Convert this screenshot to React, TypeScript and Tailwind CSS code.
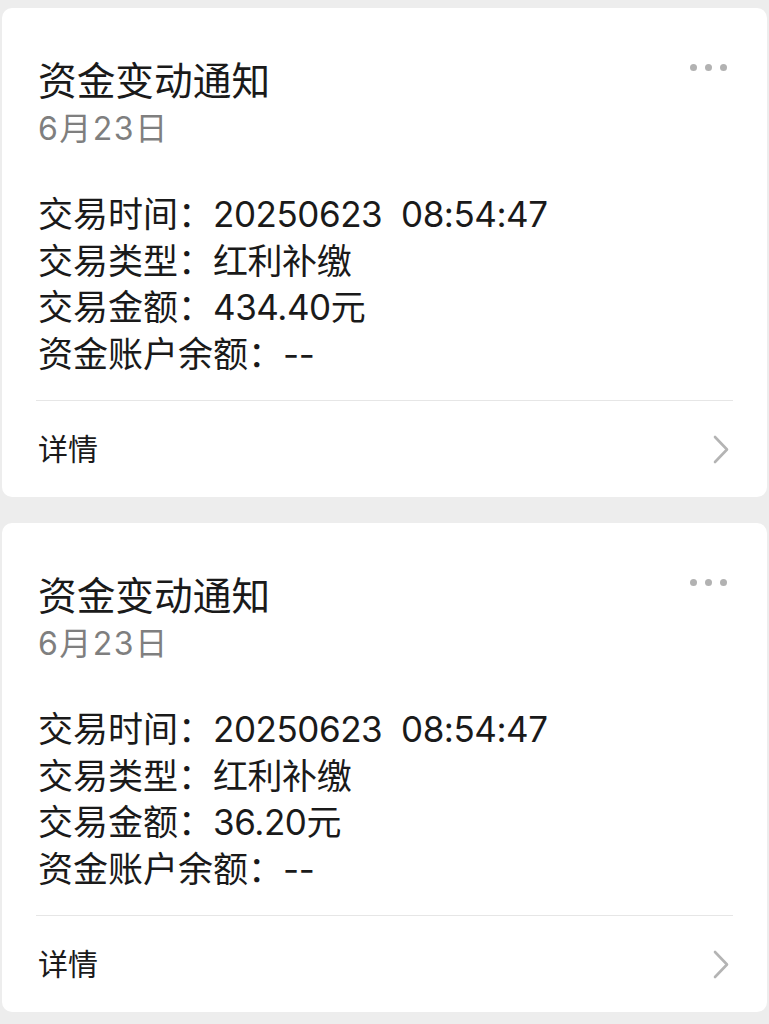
const FONT = "font-['Inter','Noto_Sans_CJK_SC',sans-serif]";

interface Notice {
  id: number;
  date: string;
  time: string;
  type: string;
  amount: string;
  balance: string;
}

const NOTICES: Notice[] = [
  { id: 1, date: "6月23日", time: "20250623  08:54:47", type: "红利补缴", amount: "434.40元", balance: "--" },
  { id: 2, date: "6月23日", time: "20250623  08:54:47", type: "红利补缴", amount: "36.20元", balance: "--" },
];

function MoreDots() {
  return (
    <div className="flex items-center gap-[8px] mt-[7px] mr-[6px]">
      <span className="block w-[7px] h-[7px] rounded-full bg-[#b2b2b2]" />
      <span className="block w-[7px] h-[7px] rounded-full bg-[#b2b2b2]" />
      <span className="block w-[7px] h-[7px] rounded-full bg-[#b2b2b2]" />
    </div>
  );
}

function Chevron() {
  return (
    <svg width="16" height="29" viewBox="0 0 16 29" fill="none" className="mr-[4px]">
      <polyline points="2,2 14,14.5 2,27" stroke="#b4b4b4" strokeWidth="2.6" strokeLinecap="round" strokeLinejoin="round" />
    </svg>
  );
}

function NoticeCard({ n }: { n: Notice }) {
  const rows = [
    ["交易时间：", n.time],
    ["交易类型：", n.type],
    ["交易金额：", n.amount],
    ["资金账户余额：", n.balance],
  ];
  return (
    <div className="bg-white rounded-[10px] px-[34px]">
      <div className="flex items-start justify-between pt-[49px]">
        <div className="pl-[2px]">
          <div className="text-[38.7px] leading-[48px] text-[#1a1a1a]">资金变动通知</div>
          <div className="text-[32px] leading-[48px] tracking-[1.5px] text-[#7f7f7f]">{n.date}</div>
        </div>
        <MoreDots />
      </div>
      <div className="mt-[38px] mb-[23px] pl-[2px]">
        {rows.map(([label, value]) => (
          <div key={label} className="text-[35px] leading-[46.5px] text-[#1a1a1a] whitespace-pre">
            {label}
            <span className="tracking-[-0.45px]">{value}</span>
          </div>
        ))}
      </div>
      <div className="border-t border-[#e6e6e6] h-[97px] flex items-center justify-between">
        <span className="pl-[2px] text-[30px] text-[#1a1a1a]">详情</span>
        <Chevron />
      </div>
    </div>
  );
}

export default function App() {
  return (
    <div className={`min-h-screen bg-[#ededed] px-[2px] pt-[8px] pb-[11px] ${FONT}`}>
      <div className="flex flex-col gap-[26px]">
        {NOTICES.map((n) => (
          <NoticeCard key={n.id} n={n} />
        ))}
      </div>
    </div>
  );
}
